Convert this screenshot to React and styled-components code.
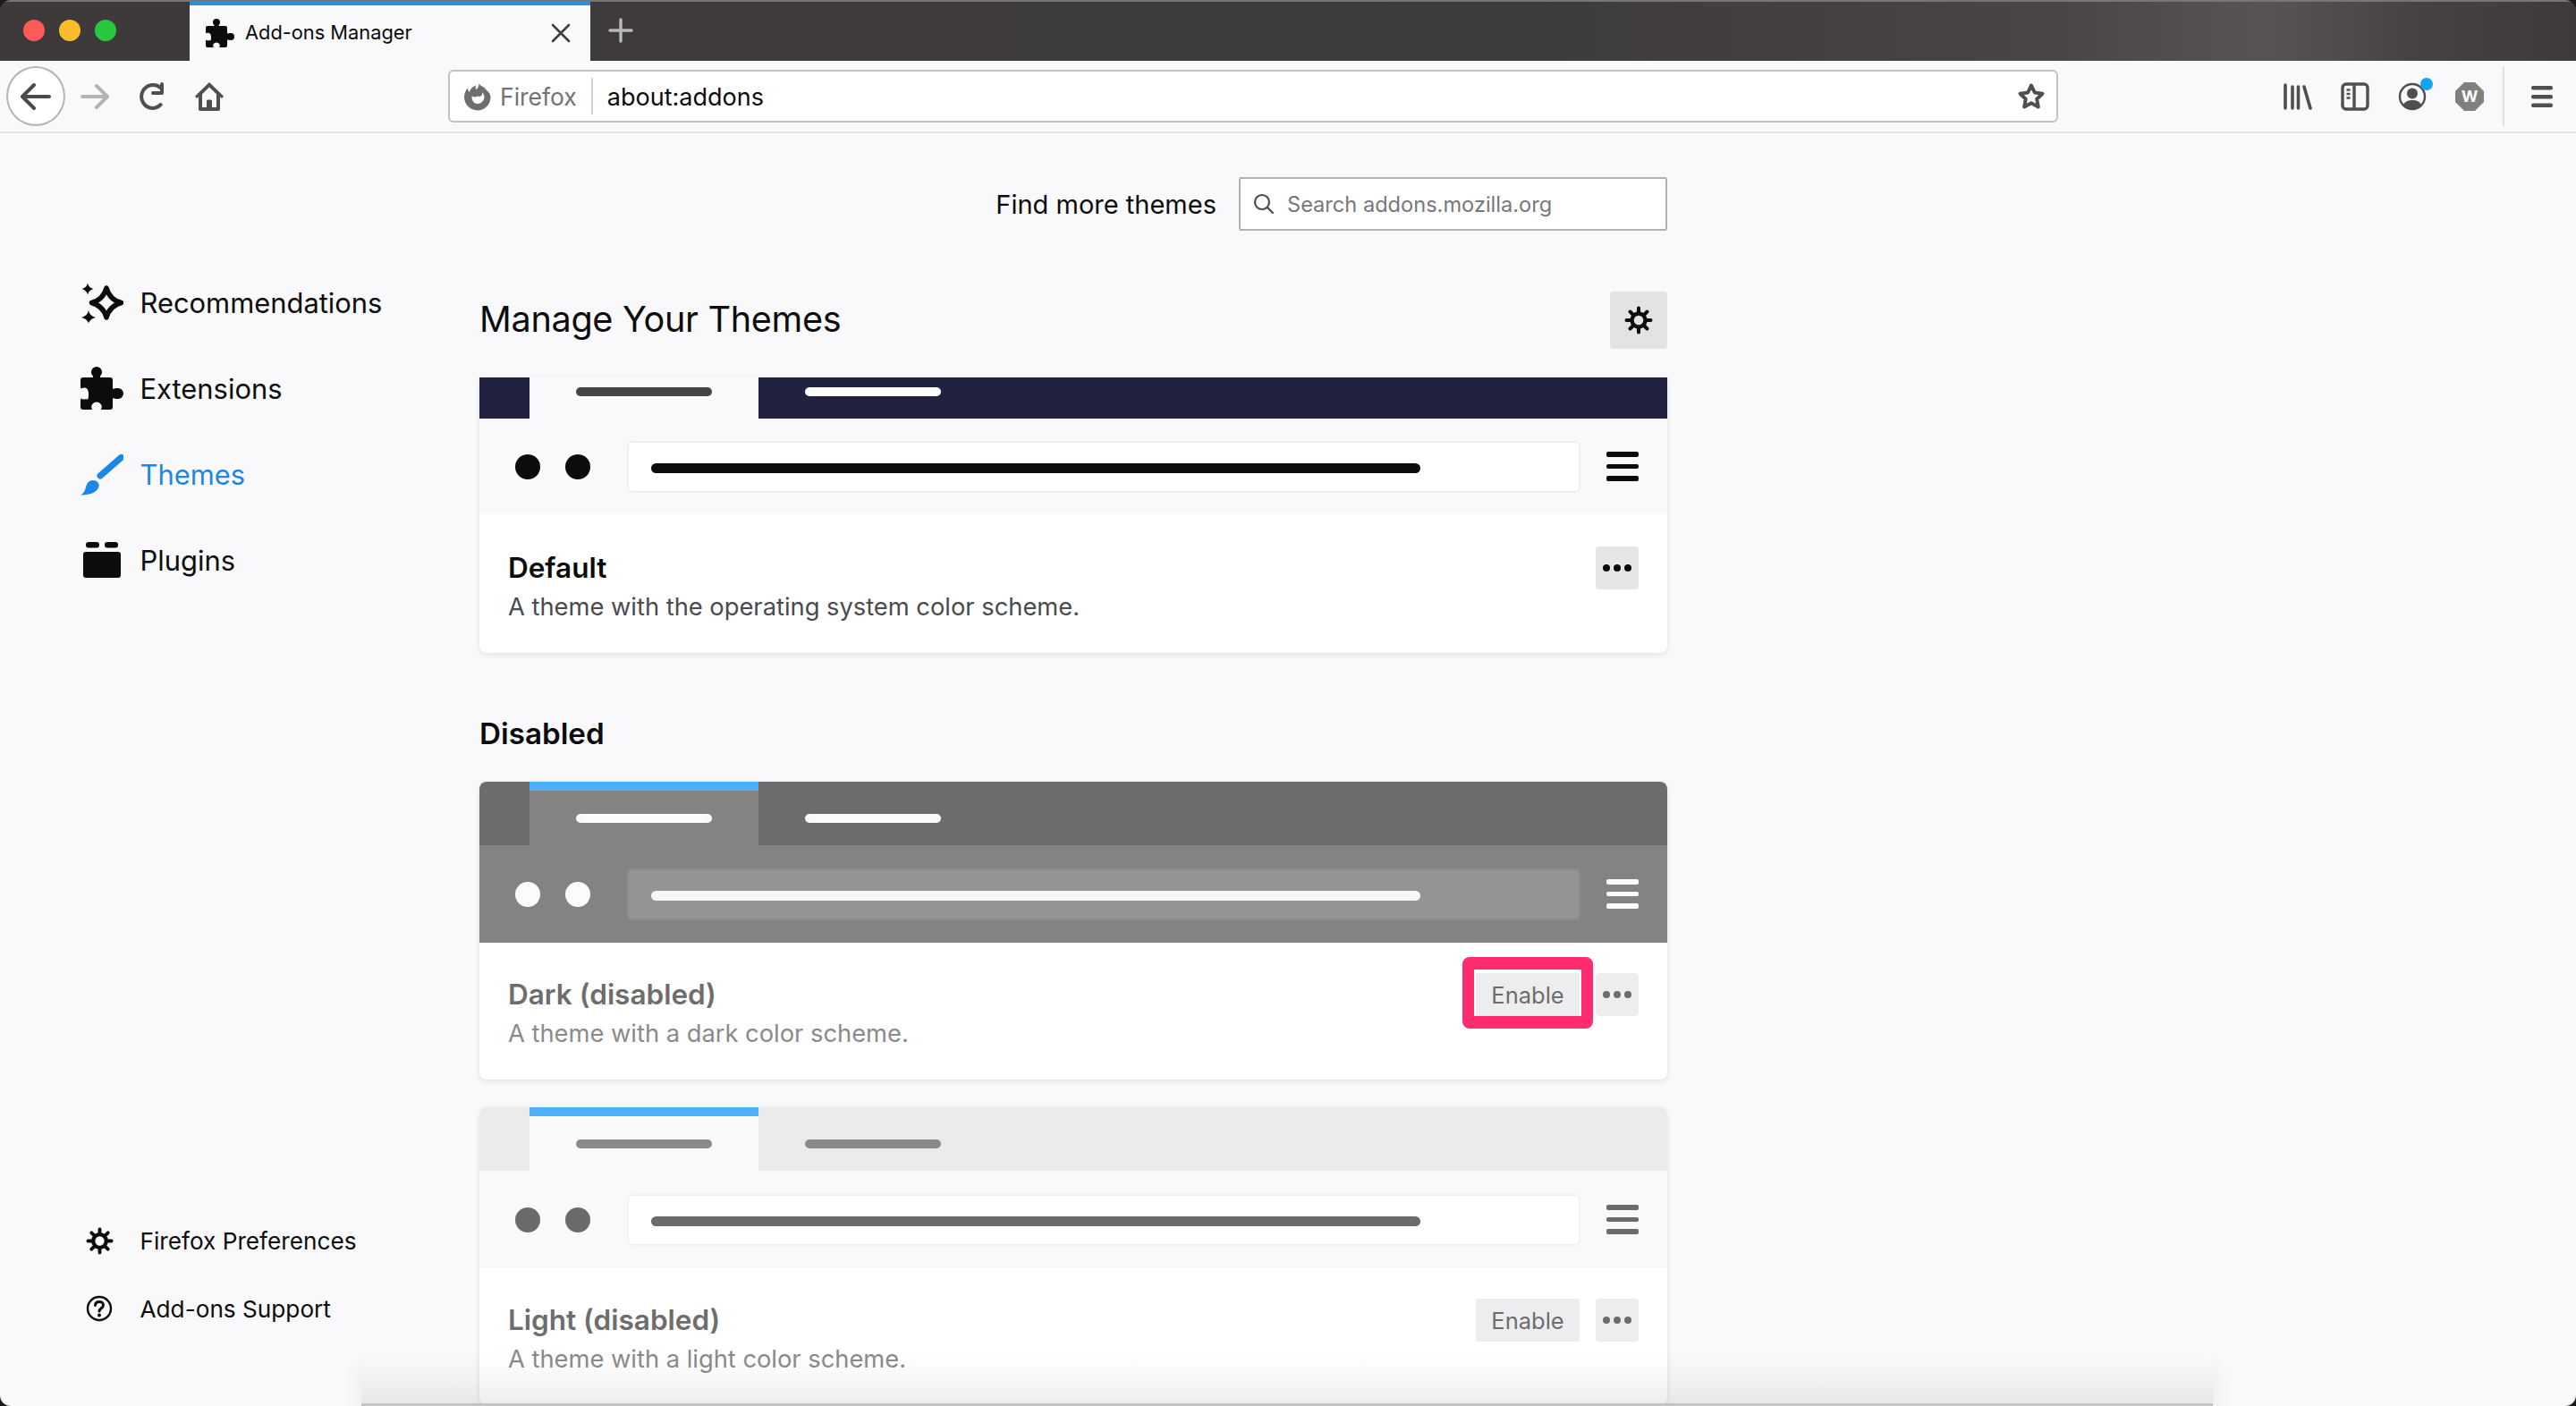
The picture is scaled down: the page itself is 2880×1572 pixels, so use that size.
import React from 'react';
import styled, { createGlobalStyle } from 'styled-components';

const GlobalStyle = createGlobalStyle`
    html, body {
        margin: 0;
        padding: 0;
        background: #1c1a1a;
        font-family: Inter, 'Noto Sans', sans-serif;
        color: #0c0c0d;
    }
    * { box-sizing: border-box; }
`;

const darkPalette = {
    tabBar: '#6d6d6d',
    toolbar: '#838383',
    address: '#949494',
    addressBorder: '#8e8e8e',
    stripe: '#4db0fa',
    tabText: '#fbfbfb',
    inactiveText: '#fbfbfb',
    icon: '#fbfbfb',
    urlText: '#f7f7f7',
    title: '#6d6d6d',
    desc: '#8a8a8c',
    tools: '#6d6d6d',
};

const lightPalette = {
    tabBar: '#ebebed',
    toolbar: '#f9f9fb',
    address: '#ffffff',
    addressBorder: '#f2f2f4',
    stripe: '#4db0fa',
    tabText: '#8a8a8a',
    inactiveText: '#8a8a8a',
    icon: '#6b6b6b',
    urlText: '#6b6b6b',
    title: '#6d6d6d',
    desc: '#8a8a8c',
    tools: '#6d6d6d',
};

const defaultPalette = {
    tabBar: '#20223f',
    toolbar: '#f9f9fb',
    address: '#ffffff',
    addressBorder: '#eeeef0',
    stripe: 'transparent',
    tabText: '#444444',
    inactiveText: '#ffffff',
    icon: '#0c0c0d',
    urlText: '#0c0c0d',
    title: '#0c0c0d',
    desc: '#4a4a4f',
    tools: '#0c0c0d',
};

const PuzzlePath = () => (
    <path d="M1 4H4.4C4.7 4 4.8 3.7 4.6 3.4 4.2 3 4 2.6 4 2a2 2 0 0 1 4 0c0 .6-.2 1-.6 1.4C7.2 3.7 7.3 4 7.6 4H11a1 1 0 0 1 1 1v2.8c0 .4.3.6.6.4.4-.2.8-.2 1.4-.2a2 2 0 0 1 0 4c-.6 0-1 0-1.4-.2-.3-.2-.6 0-.6.4V15a1 1 0 0 1-1 1H8c-.3 0-.4-.3-.2-.6.2-.4.2-.8-.2-1.4a2 2 0 0 0-3.2 0c-.4.6-.4 1-.2 1.4.2.3.1.6-.2.6H1a1 1 0 0 1-1-1v-2.6c0-.4.3-.6.6-.4.4.2.8.3 1.4 0C3 12.6 3 11.6 3 10 3 8.4 2 7.4.6 8c-.3.2-.6 0-.6-.4V5a1 1 0 0 1 1-1Z" />
);

const GearIcon = ({ size }) => (
    <svg width={size} height={size} viewBox="0 0 32 32" fill="none" stroke="currentColor">
        <circle cx="16" cy="16" r="7.5" strokeWidth="4.4" />
        <g strokeWidth="4" strokeLinecap="round">
            <path d="M16 2.5v5M16 24.5v5M2.5 16h5M24.5 16h5M6.5 6.5l3.5 3.5M22 22l3.5 3.5M6.5 25.5L10 22M22 10l3.5-3.5" />
        </g>
    </svg>
);

const DotsIcon = () => (
    <svg width="32" height="8" viewBox="0 0 32 8" fill="currentColor">
        <circle cx="4" cy="4" r="4" />
        <circle cx="16" cy="4" r="4" />
        <circle cx="28" cy="4" r="4" />
    </svg>
);

const navIcons = {
    recommendations: (
        <svg width="48" height="48" viewBox="0 0 48 48" fill="currentColor">
            <path d="M29 8Q32.5 21 45.500 24.500 32.5 28 29 41 25.500 28 12.500 24.500 25.500 21 29 8Z" fill="none" stroke="currentColor" strokeWidth="5.500" strokeLinejoin="round" />
            <path d="M8 2.5Q9 7.5 14.5 9 9 10.5 8 15.5 7 10.5 1.5 9 7 7.5 8 2.5Z" />
            <path d="M9 33Q10 39 17 41 10 42.5 9 48 8 42.5 1 41 8 39 9 33Z" />
        </svg>
    ),
    extensions: (
        <svg width="48" height="48" viewBox="0 0 16 16" fill="currentColor">
            <PuzzlePath />
        </svg>
    ),
    themes: (
        <svg width="48" height="48" viewBox="0 0 48 48" fill="currentColor">
            <path d="M45.5 5.5L22 26" stroke="currentColor" strokeWidth="7" strokeLinecap="round" />
            <path d="M14 31c4 0 7.500 3 6.500 7-1.500 6-10 10-20.500 9.500 4-2 5-5 6-9 1-4 3.500-7.500 8-7.500Z" />
        </svg>
    ),
    plugins: (
        <svg width="48" height="48" viewBox="0 0 48 48" fill="currentColor">
            <rect x="6" y="4" width="15" height="6.500" rx="3" />
            <rect x="27" y="4" width="15" height="6.500" rx="3" />
            <rect x="3" y="15" width="42" height="29" rx="3" />
        </svg>
    ),
};

const HelpIcon = () => (
    <svg width="30" height="30" viewBox="0 0 30 30" fill="none" stroke="currentColor" strokeWidth="2.400">
        <circle cx="15" cy="15" r="13" />
        <path d="M10.500 11.500c0-2.600 2-4 4.500-4s4.500 1.500 4.500 3.800c0 3.400-4.500 3.400-4.500 6.700" strokeWidth="3" strokeLinecap="round" />
        <circle cx="15" cy="22.500" r="2" fill="currentColor" stroke="none" />
    </svg>
);

const TitleBar = styled.div`
    height: 68px;
    flex: none;
    display: flex;
    align-items: flex-end;
    background: linear-gradient(90deg, #3e3a3a 0%, #3e3b3b 60%, #4a4546 80%, #585354 88%, #464243 94%, #3e3a3a 100%);
    border-top: 2px solid #77747a;
`;

const Lights = styled.div`
    width: 212px;
    height: 66px;
    display: flex;
    align-items: center;
    gap: 16px;
    padding-left: 26px;
    padding-bottom: 2px;
`;

const Light = styled.span`
    width: 24px;
    height: 24px;
    border-radius: 50%;
    background: ${({ $color }) => $color};
`;

const Tab = styled.div`
    width: 448px;
    height: 66px;
    display: flex;
    align-items: center;
    padding: 0 22px 0 18px;
    gap: 12px;
    background: #f9f9fb;
    border-top: 4px solid #2c8fd9;
    font-size: 21.800px;
    color: #0c0c0d;
`;

const TabTitle = styled.span`
    flex: 1;
    padding-bottom: 2px;
`;

const TabClose = styled.svg`
    color: #3f3f42;
`;

const NewTab = styled.svg`
    margin: 0 0 3px 20px;
    align-self: center;
    color: #b9b9ba;
`;

const Toolbar = styled.div`
    height: 81px;
    flex: none;
    display: flex;
    align-items: center;
    padding: 0 26px 0 7px;
    background: #f9f9fb;
    border-bottom: 2px solid #e3e3e5;
    color: #4f4f52;
`;

const BackButton = styled.div`
    width: 66px;
    height: 67px;
    flex: none;
    display: flex;
    align-items: center;
    justify-content: center;
    border: 2px solid #b5b5b5;
    border-radius: 50%;
    background: #fff;
`;

const ToolIcon = styled.span`
    width: ${({ $width }) => $width || 32}px;
    flex: none;
    display: flex;
    margin-left: ${({ $gap }) => $gap || 0}px;
    color: ${({ $muted }) => ($muted ? '#b4b4b6' : 'inherit')};
`;

const UrlBar = styled.div`
    width: 1800px;
    height: 59px;
    flex: none;
    margin-left: 251px;
    display: flex;
    align-items: center;
    padding: 0 12px 0 15px;
    background: #fff;
    border: 2px solid #c2c2c4;
    border-radius: 6px;
`;

const Identity = styled.span`
    font-size: 26.500px;
    color: #737373;
    margin-left: 9px;
`;

const UrlDivider = styled.span`
    width: 2px;
    height: 41px;
    margin: 0 16px 0 16px;
    background: #d2d2d4;
`;

const UrlText = styled.span`
    flex: 1;
    font-size: 27px;
    color: #0c0c0d;
    padding-top: 2px;
`;

const RightTools = styled.div`
    margin-left: auto;
    display: flex;
    align-items: center;
    gap: 32px;
`;

const ToolDivider = styled.span`
    width: 2px;
    height: 67px;
    margin: 0 30px 0 21px;
    background: #e1e1e3;
    flex: none;
`;

const AccountWrap = styled.span`
    position: relative;
    width: 32px;
    display: flex;
`;

const AccountBadge = styled.span`
    position: absolute;
    top: -5px;
    right: -7px;
    width: 14px;
    height: 14px;
    border-radius: 50%;
    background: #0fa5f2;
`;

const Page = styled.div`
    flex: 1;
    min-height: 0;
    display: flex;
    background: #f9f9fb;
`;

const Sidebar = styled.nav`
    width: 536px;
    flex: none;
    display: flex;
    flex-direction: column;
    justify-content: space-between;
    padding: 165px 0 94px 90px;
`;

const NavList = styled.div`
    display: flex;
    flex-direction: column;
    gap: 48px;
`;

const NavItem = styled.div`
    height: 48px;
    display: flex;
    align-items: center;
    gap: 18.500px;
    font-size: 30.900px;
    color: ${({ $active }) => ($active ? '#1b87e6' : '#0c0c0d')};
`;

const FooterList = styled.div`
    display: flex;
    flex-direction: column;
    gap: 46px;
`;

const FooterItem = styled.div`
    height: 30px;
    display: flex;
    align-items: center;
    font-size: 26.200px;
    color: #0c0c0d;
`;

const FooterIcon = styled.span`
    width: 66.500px;
    padding-left: 6px;
    display: flex;
    flex: none;
`;

const Main = styled.main`
    width: 1328px;
    flex: none;
    padding-top: 49px;
`;

const FindRow = styled.div`
    display: flex;
    justify-content: flex-end;
    align-items: center;
    gap: 25px;
    font-size: 29px;
`;

const SearchBox = styled.div`
    width: 479px;
    height: 60px;
    display: flex;
    align-items: center;
    gap: 14px;
    padding-left: 14px;
    background: #fff;
    border: 2px solid #b1b1b3;
    border-radius: 3px;
    font-size: 23.600px;
    color: #77777a;
`;

const HeadingRow = styled.div`
    display: flex;
    justify-content: space-between;
    align-items: center;
    margin: 68px 0 32px;
`;

const Heading = styled.h1`
    margin: 0 0 3px;
    font-size: 39.600px;
    font-weight: 400;
    letter-spacing: -0.3px;
`;

const SquareButton = styled.div`
    width: ${({ $size }) => $size}px;
    height: ${({ $high }) => $high}px;
    flex: none;
    display: flex;
    align-items: center;
    justify-content: center;
    background: ${({ $bg }) => $bg};
    border-radius: 4px;
    color: ${({ $color }) => $color};
`;

const SectionTitle = styled.h2`
    margin: 70px 0 34px;
    height: 40px;
    line-height: 40px;
    font-size: 33.200px;
    font-weight: 600;
`;

const Card = styled.section`
    margin-bottom: 31px;
    background: #fff;
    border-radius: ${({ $flat }) => ($flat ? '0 0 8px 8px' : '8px')};
    box-shadow: 0 2px 7px rgba(12, 12, 13, 0.1);
    overflow: ${({ $flat }) => ($flat ? 'hidden' : 'visible')};
`;

const TabStrip = styled.div`
    height: ${({ $height }) => $height}px;
    display: flex;
    background: ${({ $palette }) => $palette.tabBar};
    border-radius: ${({ $flat }) => ($flat ? 0 : '8px 8px 0 0')};
`;

const PreviewTab = styled.div`
    width: 256px;
    margin-left: 56px;
    padding: ${({ $barTop }) => $barTop}px 0 0 52px;
    background: ${({ $palette }) => $palette.toolbar};
    border-top: ${({ $stripe }) => ($stripe ? '10px' : 0)} solid ${({ $palette }) => $palette.stripe};
`;

const InactiveTab = styled.div`
    padding: ${({ $barTop }) => $barTop}px 0 0 52px;
`;

const TabLine = styled.div`
    width: 152px;
    height: 10px;
    border-radius: 5px;
    background: ${({ $color }) => $color};
`;

const PreviewToolbar = styled.div`
    height: ${({ $height }) => $height}px;
    display: flex;
    align-items: center;
    padding: 0 32px 0 40px;
    background: ${({ $palette }) => $palette.toolbar};
`;

const PreviewDots = styled.div`
    display: flex;
    gap: 28px;
    margin-right: 41px;
`;

const PreviewDot = styled.span`
    width: 28px;
    height: 28px;
    border-radius: 50%;
    background: ${({ $color }) => $color};
`;

const PreviewAddress = styled.div`
    width: 1066px;
    height: 58px;
    display: flex;
    align-items: center;
    padding: 3px 0 0 25px;
    border-radius: 6px;
    background: ${({ $palette }) => $palette.address};
    border: 2px solid ${({ $palette }) => $palette.addressBorder};
`;

const AddressLine = styled.div`
    width: 860px;
    height: 11px;
    border-radius: 6px;
    background: ${({ $color }) => $color};
`;

const PreviewMenu = styled.div`
    margin-left: auto;
    width: 36px;
    display: flex;
    flex-direction: column;
    gap: 8px;
`;

const MenuLine = styled.span`
    height: 5.500px;
    border-radius: 2px;
    background: ${({ $color }) => $color};
`;

const CardBody = styled.div`
    height: ${({ $height }) => $height}px;
    display: flex;
    align-items: flex-start;
    padding: ${({ $top }) => $top}px 32px 0 32px;
`;

const CardText = styled.div`
    flex: 1;
    padding-top: 4px;
`;

const CardTitle = styled.div`
    line-height: 40px;
    font-size: 31.500px;
    font-weight: 600;
    color: ${({ $color }) => $color};
`;

const CardDesc = styled.div`
    margin-top: 4px;
    line-height: 40px;
    font-size: 27.300px;
    color: ${({ $color }) => $color};
`;

const CardActions = styled.div`
    display: flex;
    gap: 18px;
`;

const EnableButton = styled.div`
    position: relative;
    width: 116px;
    height: 48px;
    display: flex;
    align-items: center;
    justify-content: center;
    background: #ededef;
    border-radius: 3px;
    font-size: 25.500px;
    color: #6d6d6d;
`;

const Highlight = styled.span`
    position: absolute;
    top: -18px;
    left: -15px;
    right: -15px;
    bottom: -14px;
    border: solid #ff2d6f;
    border-width: 14px 13px;
    border-radius: 8px;
`;

const BottomFade = styled.div`
    position: absolute;
    left: 404px;
    right: 406px;
    bottom: 0;
    height: 56px;
    background: linear-gradient(180deg, rgba(12, 12, 13, 0) 0%, rgba(12, 12, 13, 0.035) 55%, rgba(12, 12, 13, 0.075) 100%);
    border-bottom: 3px solid #c4c4c6;
    box-shadow: 0 14px 20px 4px rgba(12, 12, 13, 0.05);
`;

const Window = styled.div`
    position: relative;
    width: 2880px;
    height: 1572px;
    display: flex;
    flex-direction: column;
    overflow: hidden;
    border-radius: 12px;
`;

const ThemeCard = ({ name, description, palette, stripHeight, toolbarHeight, barTop, stripe, flat, bodyHeight, bodyTop, enable, highlighted }) => (
    <Card $flat={flat}>
        <TabStrip $palette={palette} $height={stripHeight} $flat={flat}>
            <PreviewTab $palette={palette} $barTop={barTop} $stripe={stripe}>
                <TabLine $color={palette.tabText} />
            </PreviewTab>
            <InactiveTab $barTop={stripe ? barTop + 10 : barTop}>
                <TabLine $color={palette.inactiveText} />
            </InactiveTab>
        </TabStrip>
        <PreviewToolbar $palette={palette} $height={toolbarHeight}>
            <PreviewDots>
                <PreviewDot $color={palette.icon} />
                <PreviewDot $color={palette.icon} />
            </PreviewDots>
            <PreviewAddress $palette={palette}>
                <AddressLine $color={palette.urlText} />
            </PreviewAddress>
            <PreviewMenu>
                <MenuLine $color={palette.icon} />
                <MenuLine $color={palette.icon} />
                <MenuLine $color={palette.icon} />
            </PreviewMenu>
        </PreviewToolbar>
        <CardBody $height={bodyHeight} $top={bodyTop}>
            <CardText>
                <CardTitle $color={palette.title}>{name}</CardTitle>
                <CardDesc $color={palette.desc}>{description}</CardDesc>
            </CardText>
            <CardActions>
                {enable && (
                    <EnableButton>
                        Enable
                        {highlighted && <Highlight />}
                    </EnableButton>
                )}
                <SquareButton $size={48} $high={48} $bg={enable ? '#ededef' : '#e6e6e8'} $color={palette.tools}>
                    <DotsIcon />
                </SquareButton>
            </CardActions>
        </CardBody>
    </Card>
);

const App = () => (
    <Window>
        <GlobalStyle />
        <TitleBar>
            <Lights>
                <Light $color="#fc5b57" />
                <Light $color="#fcbb2e" />
                <Light $color="#28c83e" />
            </Lights>
            <Tab>
                <svg width="32" height="32" viewBox="0 0 16 16" fill="#0c0c0d">
                    <PuzzlePath />
                </svg>
                <TabTitle>Add-ons Manager</TabTitle>
                <TabClose width="22" height="22" viewBox="0 0 22 22" fill="none" stroke="currentColor" strokeWidth="2.600" strokeLinecap="round">
                    <path d="M2 2l18 18M20 2L2 20" />
                </TabClose>
            </Tab>
            <NewTab width="28" height="28" viewBox="0 0 28 28" fill="none" stroke="currentColor" strokeWidth="3.400" strokeLinecap="round">
                <path d="M14 2v24M2 14h24" />
            </NewTab>
        </TitleBar>
        <Toolbar>
            <BackButton>
                <svg width="34" height="34" viewBox="0 0 34 34" fill="none" stroke="#4a4a4f" strokeWidth="4" strokeLinecap="round" strokeLinejoin="round">
                    <path d="M2 17h30M15 4L2 17l13 13" />
                </svg>
            </BackButton>
            <ToolIcon $gap={17} $muted>
                <svg width="32" height="32" viewBox="0 0 32 32" fill="none" stroke="currentColor" strokeWidth="4" strokeLinecap="round" strokeLinejoin="round">
                    <path d="M2 16h27M18 4l12 12-12 12" />
                </svg>
            </ToolIcon>
            <ToolIcon $gap={32}>
                <svg width="32" height="32" viewBox="0 0 32 32" fill="none" stroke="currentColor" strokeWidth="4" strokeLinecap="round" strokeLinejoin="round">
                    <path d="M26 6.500A13 13 0 1 0 16 29c4 0 7-1.500 9.500-4" />
                    <path d="M27 2v10H17" />
                </svg>
            </ToolIcon>
            <ToolIcon $gap={32}>
                <svg width="32" height="32" viewBox="0 0 32 32" fill="currentColor">
                    <path fillRule="evenodd" d="M16 0 32 15.500 30 18l-2-1.800V30a2 2 0 0 1-2 2H6a2 2 0 0 1-2-2V16.200L2 18l-2-2.500L16 0Zm0 5.500L8 13.200V28h5v-7a1.500 1.500 0 0 1 1.500-1.500h3A1.500 1.500 0 0 1 19 21v7h5V13.200L16 5.500Z" />
                </svg>
            </ToolIcon>
            <UrlBar>
                <svg width="32" height="32" viewBox="0 0 32 32" fill="#6f6f6f">
                    <path fillRule="evenodd" d="M16 31.500A15 15 0 0 1 1 16.500C1 12 3 8.500 5 6.500c0 2 .6 3.300 1.800 4.200C8 7 11 4.500 14 3.500c-.5 2-.3 3.300.5 4.500 1.500-1 3-3.200 3-6.500 1 1.500 2.500 2.500 3.500 3 1 1 3 1 4 3.500 2.500 2 5.500 5 5.500 8.500a15 15 0 0 1-14.500 15Zm0-7.500a7.500 7.500 0 0 0 7.500-7.500c0-2-1-4-2.500-5 .5 2-.5 3.500-2.500 4.500-2-.5-4.500-.5-6 1 .5-.5-2-1.500-3-1 0 4.500 2.500 8 6.500 8Z" />
                </svg>
                <Identity>Firefox</Identity>
                <UrlDivider />
                <UrlText>about:addons</UrlText>
                <svg width="32" height="32" viewBox="0 0 32 32" fill="none" stroke="currentColor" strokeWidth="4" strokeLinejoin="round">
                    <path d="M16 3.500l3.800 8 8.700 1.200-6.300 6 1.600 8.800-7.800-4.300-7.800 4.300 1.600-8.800-6.300-6 8.700-1.200 3.800-8Z" />
                </svg>
            </UrlBar>
            <RightTools>
                <ToolIcon>
                    <svg width="32" height="32" viewBox="0 0 32 32" fill="none" stroke="currentColor" strokeWidth="3.600" strokeLinecap="round">
                        <path d="M2 3v26M10 5v24M16.500 5v24M23 5l7 24" />
                    </svg>
                </ToolIcon>
                <ToolIcon>
                    <svg width="32" height="32" viewBox="0 0 32 32" fill="none" stroke="currentColor" strokeWidth="3.400">
                        <rect x="2" y="2" width="28" height="28" rx="4" />
                        <path d="M15 2v28" />
                        <path d="M6.500 8.500h4M6.500 13h4M6.500 17.500h4" strokeWidth="2.400" />
                    </svg>
                </ToolIcon>
                <AccountWrap>
                    <svg width="32" height="32" viewBox="0 0 32 32" fill="none" stroke="currentColor" strokeWidth="2.400">
                        <circle cx="16" cy="16" r="14" />
                        <circle cx="16" cy="12.500" r="6" fill="currentColor" stroke="none" />
                        <path d="M6 25c2-4 6-5 10-5s8 1 10 5c-3 3-6 4.500-10 4.500S9 28 6 25Z" fill="currentColor" stroke="none" />
                    </svg>
                    <AccountBadge />
                </AccountWrap>
                <ToolIcon>
                    <svg width="32" height="32" viewBox="0 0 32 32">
                        <path d="M10 0h12l10 10v12L22 32H10L0 22V10Z" fill="#808080" />
                        <text x="16" y="22" textAnchor="middle" fontSize="18" fontWeight="700" fontFamily="Inter, sans-serif" fill="#ffffff">W</text>
                    </svg>
                </ToolIcon>
            </RightTools>
            <ToolDivider />
            <ToolIcon $width={24}>
                <svg width="24" height="24" viewBox="0 0 24 24" fill="currentColor">
                    <rect x="0" y="0" width="24" height="4.500" rx="2" />
                    <rect x="0" y="10" width="24" height="4.500" rx="2" />
                    <rect x="0" y="19.500" width="24" height="4.500" rx="2" />
                </svg>
            </ToolIcon>
        </Toolbar>
        <Page>
            <Sidebar>
                <NavList>
                    <NavItem>{navIcons.recommendations}Recommendations</NavItem>
                    <NavItem>{navIcons.extensions}Extensions</NavItem>
                    <NavItem $active>{navIcons.themes}Themes</NavItem>
                    <NavItem>{navIcons.plugins}Plugins</NavItem>
                </NavList>
                <FooterList>
                    <FooterItem>
                        <FooterIcon><GearIcon size={31} /></FooterIcon>
                        Firefox Preferences
                    </FooterItem>
                    <FooterItem>
                        <FooterIcon><HelpIcon /></FooterIcon>
                        Add-ons Support
                    </FooterItem>
                </FooterList>
            </Sidebar>
            <Main>
                <FindRow>
                    Find more themes
                    <SearchBox>
                        <svg width="24" height="24" viewBox="0 0 24 24" fill="none" stroke="#4a4a4f" strokeWidth="2.200" strokeLinecap="round">
                            <circle cx="10" cy="10" r="8" />
                            <path d="M16 16l6 6" />
                        </svg>
                        Search addons.mozilla.org
                    </SearchBox>
                </FindRow>
                <HeadingRow>
                    <Heading>Manage Your Themes</Heading>
                    <SquareButton $size={64} $high={64} $bg="#e3e3e5" $color="#0c0c0d">
                        <GearIcon size={32} />
                    </SquareButton>
                </HeadingRow>
                <ThemeCard
                    name="Default"
                    description="A theme with the operating system color scheme."
                    palette={defaultPalette}
                    stripHeight={46}
                    toolbarHeight={107}
                    barTop={11}
                    flat
                    bodyHeight={155}
                    bodyTop={36}
                />
                <SectionTitle>Disabled</SectionTitle>
                <ThemeCard
                    name="Dark (disabled)"
                    description="A theme with a dark color scheme."
                    palette={darkPalette}
                    stripHeight={71}
                    toolbarHeight={109}
                    barTop={26}
                    stripe
                    bodyHeight={153}
                    bodyTop={34}
                    enable
                    highlighted
                />
                <ThemeCard
                    name="Light (disabled)"
                    description="A theme with a light color scheme."
                    palette={lightPalette}
                    stripHeight={71}
                    toolbarHeight={109}
                    barTop={26}
                    stripe
                    bodyHeight={153}
                    bodyTop={34}
                    enable
                />
            </Main>
        </Page>
        <BottomFade />
    </Window>
);

export default App;
